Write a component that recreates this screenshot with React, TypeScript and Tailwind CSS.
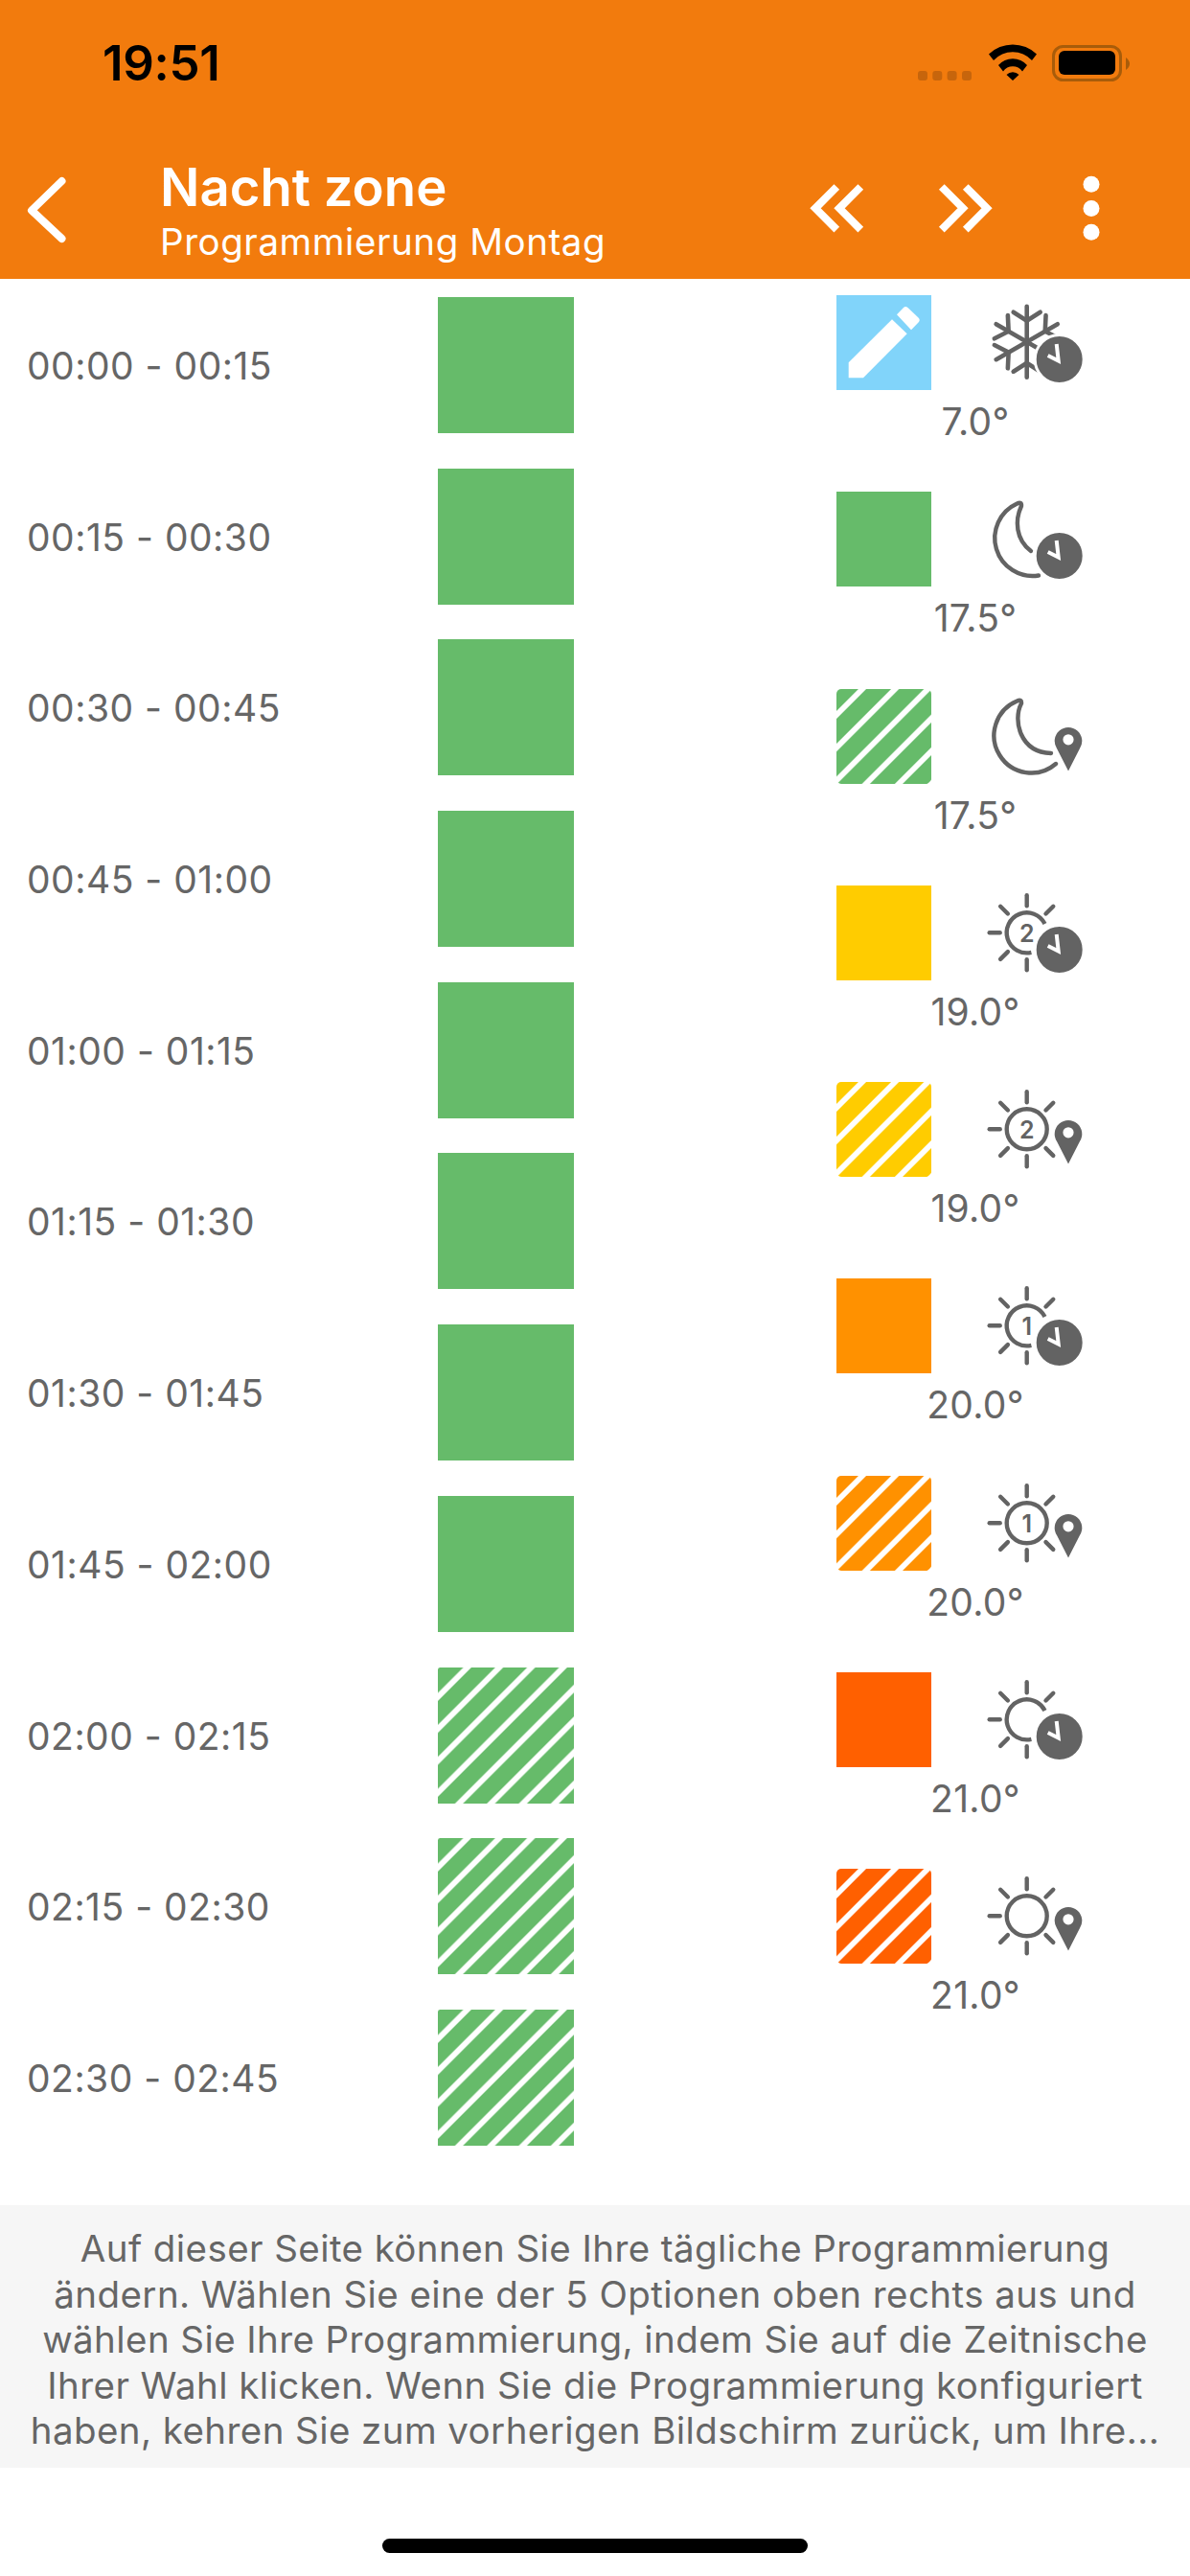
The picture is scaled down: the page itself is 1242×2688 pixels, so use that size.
function ClockBadge() {
  return (
    <g transform="translate(75.7 67)">
      <circle r="25.5" fill="#636363" stroke="#fff" strokeWidth="3" />
      <path d="M-3 -16 L-1 1.5 L-12 -4" fill="none" stroke="#fff" strokeWidth="4" strokeLinejoin="miter" />
    </g>
  );
}

function PinBadge() {
  return (
    <path
      fillRule="evenodd"
      fill="#636363"
      d="M85 85.5 L73 62 A14.3 14.3 0 1 1 97 62 Z M85 47.2 A5.6 5.6 0 1 0 85 58.4 A5.6 5.6 0 1 0 85 47.2 Z"
    />
  );
}

function Snow() {
  const arm = (
    <g>
      <path d="M0 0 V-37" />
      <path d="M-14 -31 L0 -22 L14 -31" />
    </g>
  );
  return (
    <g transform="translate(41.7 48.7)" fill="none" stroke="#636363" strokeWidth="4.6" strokeLinecap="round">
      {[0, 60, 120, 180, 240, 300].map((a) => (
        <g key={a} transform={`rotate(${a})`}>
          {arm}
        </g>
      ))}
    </g>
  );
}

function Moon({ pin }: { pin?: boolean }) {
  return (
    <path
      fill="none"
      stroke="#636363"
      strokeWidth="4.4"
      strokeLinecap="round"
      strokeLinejoin="round"
      d={
        pin
          ? "M72 78 A39 39 0 1 1 31.5 12.5 Q36.5 10 36 15 C27 32 34 66 67 67"
          : "M54 87.5 A39.5 39.5 0 0 1 31.5 12.5 Q36.5 10 36 15 C29 30 30 50 46 62"
      }
    />
  );
}

function Sun({ pin, digit }: { pin?: boolean; digit?: string }) {
  const angles = pin ? [0, 45, 135, 180, 225, 270, 315] : [0, 45, 180, 225, 270, 315];
  return (
    <g>
      <g transform="translate(41.7 49.3)" fill="none" stroke="#636363" strokeWidth="4.4" strokeLinecap="round">
        {angles.map((a) => (
          <path key={a} d="M0 -39 V-28" transform={`rotate(${a})`} />
        ))}
      </g>
      {pin ? (
        <circle cx="41.7" cy="49.3" r="21" fill="none" stroke="#636363" strokeWidth="4.4" />
      ) : (
        <path d="M60.5 40 A21 21 0 1 0 46.4 69.8" fill="none" stroke="#636363" strokeWidth="4.4" />
      )}
      {digit && (
        <text
          x="41.7"
          y="58.5"
          textAnchor="middle"
          fontSize="25"
          fontWeight="600"
          fill="#636363"
          fontFamily="Inter, sans-serif"
        >
          {digit}
        </text>
      )}
    </g>
  );
}

function ModeIcon({ kind, pin, digit }: { kind: string; pin?: boolean; digit?: string }) {
  return (
    <svg width="105" height="100" viewBox="0 0 105 100" className="block">
      {kind === "snow" && <Snow />}
      {kind === "moon" && <Moon pin={pin} />}
      {kind === "sun" && <Sun pin={pin} digit={digit} />}
      {pin ? <PinBadge /> : <ClockBadge />}
    </svg>
  );
}

function Pencil() {
  return (
    <svg width="99" height="99" viewBox="0 0 99 99" className="block">
      <path fill="#fff" d="M12.7 70.3 L58 25.3 L73.7 40.3 L28 86.3 H12.7 Z" />
      <path fill="#fff" d="M63 20.3 L70 13 Q72 11 74.5 13 L85.5 23.5 Q88 26 85.5 28.5 L78 36.3 Z" />
    </svg>
  );
}

const legend: {
  swatch: string;
  kind: string;
  temp: string;
  pin?: boolean;
  digit?: string;
  pencil?: boolean;
}[] = [
  { swatch: "bg-[#81d4fa]", kind: "snow", temp: "7.0°", pencil: true },
  { swatch: "bg-[#66bb6a]", kind: "moon", temp: "17.5°" },
  {
    swatch:
      "rounded-[5px] bg-[repeating-linear-gradient(135deg,#fff_-7.4px,#fff_-2.8px,#66bb6a_-1.6px,#66bb6a_15.6px,#fff_16.8px)]",
    kind: "moon",
    pin: true,
    temp: "17.5°",
  },
  { swatch: "bg-[#ffcc00]", kind: "sun", digit: "2", temp: "19.0°" },
  {
    swatch:
      "rounded-[5px] bg-[repeating-linear-gradient(135deg,#fff_-7.4px,#fff_-2.8px,#ffcc00_-1.6px,#ffcc00_15.6px,#fff_16.8px)]",
    kind: "sun",
    digit: "2",
    pin: true,
    temp: "19.0°",
  },
  { swatch: "bg-[#ff9100]", kind: "sun", digit: "1", temp: "20.0°" },
  {
    swatch:
      "rounded-[5px] bg-[repeating-linear-gradient(135deg,#fff_-7.4px,#fff_-2.8px,#ff9100_-1.6px,#ff9100_15.6px,#fff_16.8px)]",
    kind: "sun",
    digit: "1",
    pin: true,
    temp: "20.0°",
  },
  { swatch: "bg-[#ff6000]", kind: "sun", temp: "21.0°" },
  {
    swatch:
      "rounded-[5px] bg-[repeating-linear-gradient(135deg,#fff_-7.4px,#fff_-2.8px,#ff6000_-1.6px,#ff6000_15.6px,#fff_16.8px)]",
    kind: "sun",
    pin: true,
    temp: "21.0°",
  },
];

const slots = [
  ["00:00 - 00:15", false],
  ["00:15 - 00:30", false],
  ["00:30 - 00:45", false],
  ["00:45 - 01:00", false],
  ["01:00 - 01:15", false],
  ["01:15 - 01:30", false],
  ["01:30 - 01:45", false],
  ["01:45 - 02:00", false],
  ["02:00 - 02:15", true],
  ["02:15 - 02:30", true],
  ["02:30 - 02:45", true],
] as const;

export default function App() {
  return (
    <div className="relative w-[1242px] h-[2688px] bg-white overflow-hidden font-['Inter','Liberation_Sans',sans-serif] text-[#666666]">
      <header className="h-[291px] bg-[#f27b0d]">
        <div className="flex h-[132px] items-start justify-between pl-[107px] pr-[62px] pt-[42px]">
          <span className="text-[51px] leading-[48px] font-semibold tracking-[-0.3px] text-black">19:51</span>
          <svg width="222" height="44" viewBox="0 0 222 44" className="mt-[3px] block">
            <g fill="#c7650c">
              <rect x="0" y="29" width="10" height="10" rx="3" />
              <rect x="15.3" y="29" width="10" height="10" rx="3" />
              <rect x="30.6" y="29" width="10" height="10" rx="3" />
              <rect x="46" y="29" width="10" height="10" rx="3" />
            </g>
            <path
              d="M74 11.5 A36 36 0 0 1 124 11.5 L119 18 A27 27 0 0 0 79 18 Z M84 23 A20 20 0 0 1 114 23 L109 29.5 A12 12 0 0 0 89 29.5 Z M92.5 33 A9 9 0 0 1 105.5 33 L99 39 Z"
              fill="#000"
            />
            <rect x="141.5" y="3.5" width="70" height="35" rx="10" fill="none" stroke="#a85c0a" strokeWidth="3" />
            <rect x="147" y="8" width="59" height="25" rx="6" fill="#000" />
            <path d="M217 15 Q221 18 221 21.5 Q221 25 217 28 Z" fill="#a85c0a" />
          </svg>
        </div>
        <div className="flex h-[159px] items-start">
          <svg width="107" height="159" viewBox="0 0 107 159" className="block shrink-0">
            <path
              d="M64.5 57 L33 87.5 L64.5 117"
              fill="none"
              stroke="#fff"
              strokeWidth="8"
              strokeLinecap="round"
              strokeLinejoin="round"
            />
          </svg>
          <div className="ml-[60px] flex w-[670px] flex-col text-white">
            <span className="mt-[33px] text-[54.5px] leading-[60px] font-semibold">Nacht zone</span>
            <span className="mt-[4px] text-[38.5px] leading-[46px] tracking-[0.55px]">Programmierung Montag</span>
          </div>
          <svg width="320" height="159" viewBox="0 0 320 159" className="block shrink-0 -ml-[2px]">
            <g fill="none" stroke="#fff" strokeWidth="8">
              <path d="M38.3 63 L16 85.3 L38.3 107.6 M63.3 63 L41 85.3 L63.3 107.6" />
              <path d="M147.8 63 L170 85.3 L147.8 107.6 M172.8 63 L195 85.3 L172.8 107.6" />
            </g>
            <g fill="#fff">
              <circle cx="304" cy="60.3" r="8.5" />
              <circle cx="304" cy="85.5" r="8.5" />
              <circle cx="304" cy="110.3" r="8.5" />
            </g>
          </svg>
        </div>
      </header>

      <main className="flex h-[2010px]">
        <div className="flex w-[843px] flex-col pt-[19px] pl-[28px]">
          {slots.map(([label, striped]) => (
            <div key={label} className="flex h-[178.7px] shrink-0 items-start">
              <span className="mt-[49px] w-[429px] text-[39px] leading-[46px] tracking-[0.5px]">{label}</span>
              <div
                className={
                  striped
                    ? "h-[142px] w-[142px] bg-[repeating-linear-gradient(135deg,#fff_-4.1px,#fff_0.4px,#66bb6a_1.8px,#66bb6a_18px,#fff_19.47px)]"
                    : "h-[142px] w-[142px] bg-[#66bb6a]"
                }
              />
            </div>
          ))}
        </div>
        <div className="flex flex-col pt-[17px] pl-[30px]">
          {legend.map((item, i) => (
            <div key={i} className="relative h-[205.25px] shrink-0 w-[320px]">
              <div className="flex items-start">
                <div className={`h-[99px] w-[99px] shrink-0 ${item.swatch}`}>{item.pencil && <Pencil />}</div>
                <div className="ml-[58px]">
                  <ModeIcon kind={item.kind} pin={item.pin} digit={item.digit} />
                </div>
              </div>
              <div className="mt-[9px] w-[290px] text-center text-[39px] leading-[46px] tracking-[0.3px]">{item.temp}</div>
            </div>
          ))}
        </div>
      </main>

      <section className="h-[274px] bg-[#f6f6f6] pt-[22px] text-center text-[38.5px] leading-[47.6px] tracking-[0.42px] whitespace-nowrap">
        <div>Auf dieser Seite können Sie Ihre tägliche Programmierung</div>
        <div>ändern. Wählen Sie eine der 5 Optionen oben rechts aus und</div>
        <div>wählen Sie Ihre Programmierung, indem Sie auf die Zeitnische</div>
        <div>Ihrer Wahl klicken. Wenn Sie die Programmierung konfiguriert</div>
        <div>haben, kehren Sie zum vorherigen Bildschirm zurück, um Ihre...</div>
      </section>

      <div className="flex justify-center pt-[74px]">
        <div className="h-[15px] w-[444px] rounded-full bg-black" />
      </div>
    </div>
  );
}
